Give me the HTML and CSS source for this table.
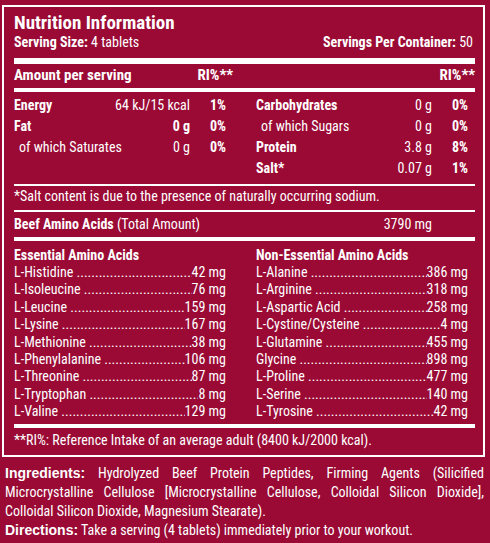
FILE: index.html
```html
<!DOCTYPE html>
<html lang="en">
<head>
    <meta charset="UTF-8">
    <meta name="viewport" content="width=device-width, initial-scale=1.0">
    <title>Nutrition Information</title>
    <link rel="stylesheet" href="styles.css">
</head>
<body>
    <div class="label">
        <h1>Nutrition Information</h1>
        <div class="serving">
            <span><b>Serving Size:</b> 4 tablets</span>
            <span><b>Servings Per Container:</b> 50</span>
        </div>

        <div class="bar thick"></div>
        <div class="halves head">
            <div class="half"><span>Amount per serving</span><span>RI%**</span></div>
            <div class="half"><span></span><span>RI%**</span></div>
        </div>
        <div class="bar"></div>

        <!-- Nutrients per serving -->
        <div class="halves facts-wrap">
            <div class="facts">
                <b>Energy</b><span class="val">64 kJ/15 kcal</span><b class="pct">1%</b>
                <b>Fat</b><b class="val">0 g</b><b class="pct">0%</b>
                <span class="sub">of which Saturates</span><span class="val">0 g</span><b class="pct">0%</b>
            </div>
            <div class="facts">
                <b>Carbohydrates</b><span class="val">0 g</span><b class="pct">0%</b>
                <span class="sub">of which Sugars</span><span class="val">0 g</span><b class="pct">0%</b>
                <b>Protein</b><span class="val">3.8 g</span><b class="pct">8%</b>
                <b>Salt*</b><span class="val">0.07 g</span><b class="pct">1%</b>
            </div>
        </div>

        <div class="rule"></div>
        <p class="note">*Salt content is due to the presence of naturally occurring sodium.</p>
        <div class="rule"></div>

        <div class="halves total">
            <div><b>Beef Amino Acids</b> (Total Amount)</div>
            <div class="total-val"><span>3790 mg</span></div>
        </div>
        <div class="bar"></div>

        <!-- Amino acid profile -->
        <div class="halves amino">
            <div class="amino-col">
                <h2>Essential Amino Acids</h2>
                <div class="row"><span class="name">L-Histidine</span><span class="amt">42 mg</span></div>
                <div class="row"><span class="name">L-Isoleucine</span><span class="amt">76 mg</span></div>
                <div class="row"><span class="name">L-Leucine</span><span class="amt">159 mg</span></div>
                <div class="row"><span class="name">L-Lysine</span><span class="amt">167 mg</span></div>
                <div class="row"><span class="name">L-Methionine</span><span class="amt">38 mg</span></div>
                <div class="row"><span class="name">L-Phenylalanine</span><span class="amt">106 mg</span></div>
                <div class="row"><span class="name">L-Threonine</span><span class="amt">87 mg</span></div>
                <div class="row"><span class="name">L-Tryptophan</span><span class="amt">8 mg</span></div>
                <div class="row"><span class="name">L-Valine</span><span class="amt">129 mg</span></div>
            </div>
            <div class="amino-col">
                <h2>Non-Essential Amino Acids</h2>
                <div class="row"><span class="name">L-Alanine</span><span class="amt">386 mg</span></div>
                <div class="row"><span class="name">L-Arginine</span><span class="amt">318 mg</span></div>
                <div class="row"><span class="name">L-Aspartic Acid</span><span class="amt">258 mg</span></div>
                <div class="row"><span class="name">L-Cystine/Cysteine</span><span class="amt">4 mg</span></div>
                <div class="row"><span class="name">L-Glutamine</span><span class="amt">455 mg</span></div>
                <div class="row"><span class="name">Glycine</span><span class="amt">898 mg</span></div>
                <div class="row"><span class="name">L-Proline</span><span class="amt">477 mg</span></div>
                <div class="row"><span class="name">L-Serine</span><span class="amt">140 mg</span></div>
                <div class="row"><span class="name">L-Tyrosine</span><span class="amt">42 mg</span></div>
            </div>
        </div>

        <div class="bar low"></div>
        <p class="note foot">**RI%: Reference Intake of an average adult (8400 kJ/2000 kcal).</p>
    </div>

    <p class="ingredients"><b>Ingredients:</b> Hydrolyzed Beef Protein Peptides, Firming Agents (Silicified Microcrystalline Cellulose [Microcrystalline Cellulose, Colloidal Silicon Dioxide], Colloidal Silicon Dioxide, Magnesium Stearate).</p>
    <p class="directions"><b>Directions:</b> Take a serving (4 tablets) immediately prior to your workout.</p>
</body>
</html>
```

FILE: styles.css
```css
body {
    margin: 0;
    background-color: #9a0a35;
    color: #fff;
    font-family: "Roboto Condensed", "Open Sans", "DejaVu Sans Condensed", sans-serif;
    font-stretch: 75%;
    font-size: 14px;
}
.label {
    margin: 5px 5px 0 2px;
    border: 2px solid #fff;
    padding: 6px 8px 6px 10px;
}
h1 {
    margin: 0;
    font-size: 19px;
    line-height: 20px;
}
.serving {
    display: flex;
    justify-content: space-between;
    margin-top: 1px;
    padding-right: 2px;
    line-height: 16px;
}
.bar {
    background-color: #fff;
    height: 4px;
    margin-top: 4px;
}
.bar.thick {
    height: 6px;
    margin-top: 8px;
}
.bar.low {
    margin-top: 3px;
}
.halves {
    display: grid;
    grid-template-columns: repeat(2, minmax(0, 1fr));
    column-gap: 23px;
    align-items: start;
}
.head {
    margin-top: 2px;
    font-size: 15px;
    font-weight: bold;
    line-height: 18px;
}
.half {
    display: flex;
    justify-content: space-between;
}
/* Nutrient tables */
.facts-wrap {
    margin-top: 3px;
}
.facts {
    display: grid;
    grid-template-columns: minmax(0, 1fr) auto 36px;
    padding-right: 7px;
    line-height: 21px;
    white-space: nowrap;
}
.val, .pct {
    text-align: right;
}
.sub {
    padding-left: 5px;
}
.rule {
    background-color: #fff;
    height: 2px;
    margin-top: 5px;
}
.note {
    margin: 1px 0 0;
    line-height: 18px;
}
.note.foot {
    margin-top: 3px;
}
.total {
    margin-top: 3px;
    line-height: 18px;
}
.total-val {
    text-align: right;
    padding-right: 43px;
}
/* Amino acids */
.amino {
    margin-top: 5px;
}
.amino h2 {
    margin: 0;
    font-size: 14px;
    line-height: 18px;
}
.amino-col {
    padding-right: 7px;
}
.row {
    display: flex;
    line-height: 17.4px;
    white-space: nowrap;
}
.name {
    flex: 1;
    min-width: 0;
    overflow: hidden;
}
.name::after {
    content: " ..........................................................................";
}
.ingredients, .directions {
    margin: 0 6px 0 5px;
    line-height: 19px;
}
.ingredients {
    margin-top: 7px;
    text-align: justify;
}
.ingredients b, .directions b {
    font-family: "Liberation Sans", Arial, sans-serif;
    font-stretch: normal;
}
```
